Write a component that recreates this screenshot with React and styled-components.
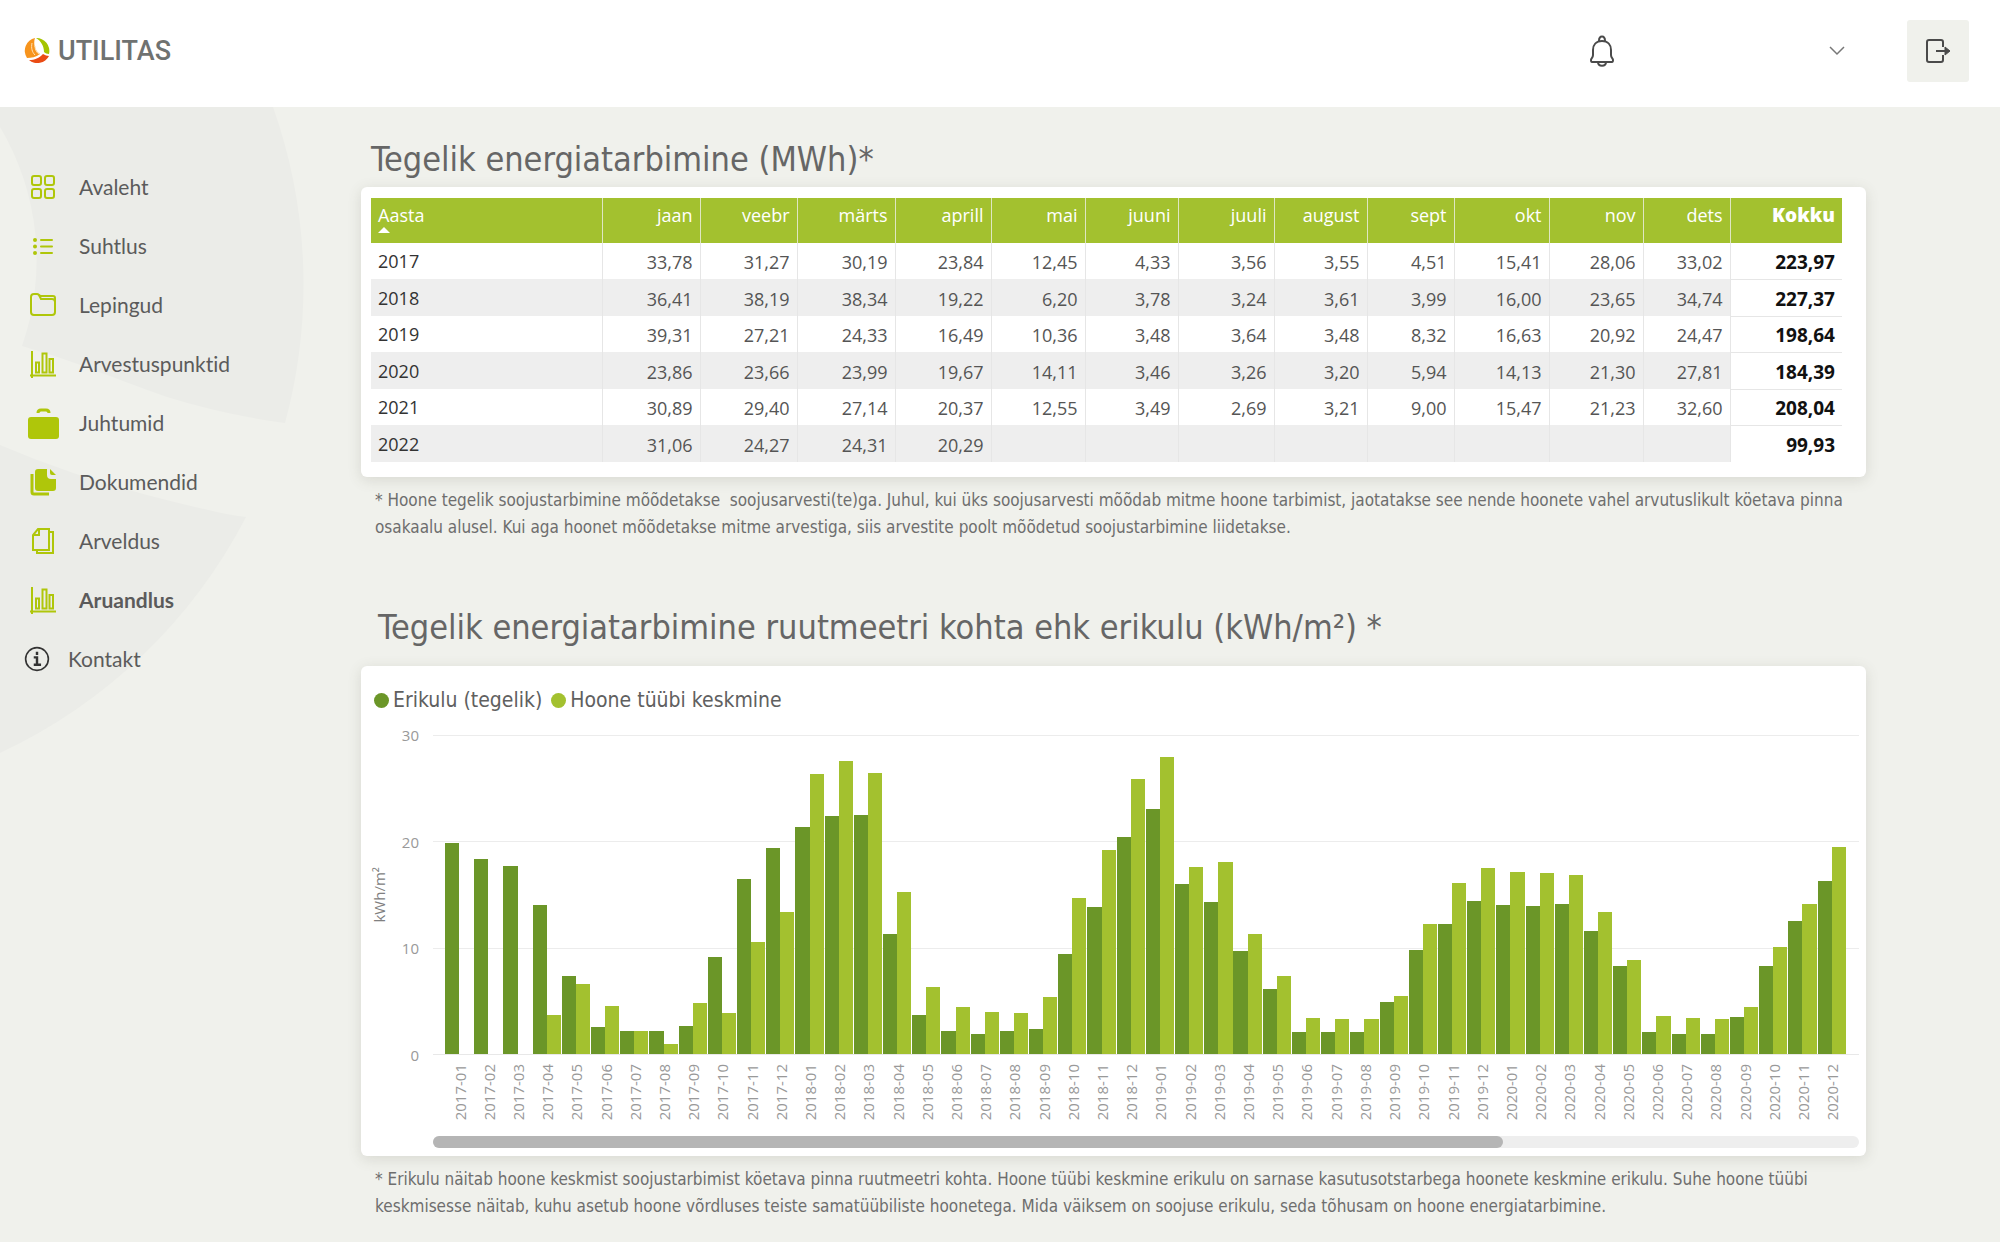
import React from 'react';
import styled, { createGlobalStyle, css } from 'styled-components';

const color = {
  green: '#a3c12f',
  darkGreen: '#6b9628',
  icon: '#afc60a',
  page: '#f0f1ec',
  wave: '#ebece8',
  text: '#5b5b5b',
  muted: '#6e6e6e',
  axis: '#999999',
};

const GlobalStyle = createGlobalStyle`
  * {
    box-sizing: border-box;
  }

  body {
    margin: 0;
    background: ${color.page};
    color: ${color.text};
    font-family: 'DejaVu Sans Condensed', 'DejaVu Sans', sans-serif;
  }
`;

const Header = styled.header`
  display: flex;
  align-items: center;
  height: 107px;
  padding: 0 31px 6px 24px;
  background: #fff;
`;

const Logo = styled.a`
  display: flex;
  align-items: center;
  gap: 8px;
  margin-right: auto;
  color: #6f7271;
  font: 500 27px/32px Roboto, sans-serif;
  text-decoration: none;
`;

const IconButton = styled.button`
  display: flex;
  align-items: center;
  justify-content: center;
  padding: 0;
  border: 0;
  background: none;
  color: #4a4a4a;
  cursor: pointer;
`;

const AccountButton = styled(IconButton)`
  justify-content: flex-end;
  width: 230px;
  margin-right: 62px;
  color: #777;
`;

const LogoutButton = styled(IconButton)`
  width: 62px;
  height: 62px;
  border-radius: 3px;
  background: ${color.page};
`;

const Body = styled.div`
  position: relative;
  display: flex;
  min-height: calc(100vh - 107px);
`;

const Wave = styled.svg`
  position: absolute;
  top: 0;
  left: 0;
`;

const Sidebar = styled.nav`
  position: relative;
  flex: 0 0 361px;
  padding-top: 50px;
`;

const NavList = styled.ul`
  margin: 0;
  padding: 0;
  list-style: none;
`;

const NavLink = styled.a`
  display: flex;
  align-items: center;
  gap: ${({ $compact }) => ($compact ? 18 : 20)}px;
  height: 59px;
  padding-left: ${({ $compact }) => ($compact ? 24 : 27)}px;
  color: ${color.text};
  font: ${({ $active }) => ($active ? 700 : 400)} 21px/28px Lato, sans-serif;
  font-variant-ligatures: none;
  text-decoration: none;

  svg {
    flex: none;
    color: ${({ $compact }) => ($compact ? '#333' : color.icon)};
  }
`;

const Main = styled.main`
  position: relative;
  flex: 1;
  min-width: 0;
  padding: 30px 134px 0 0;
`;

const Title = styled.h1`
  margin: 0;
  padding: 0 10px;
  color: #666;
  font-size: 34px;
  font-weight: 400;
  line-height: 44px;
`;

const Subtitle = styled(Title).attrs({ as: 'h2' })`
  margin-top: 64px;
  padding: 0 17px;
`;

const Card = styled.section`
  border-radius: 6px;
  background: #fff;
  box-shadow: 0 3px 14px rgba(90, 90, 70, 0.16);
`;

const TableCard = styled(Card)`
  margin-top: 6px;
  padding: 11px 24px 15px 10px;
`;

const ChartCard = styled(Card)`
  margin-top: 17px;
  padding: 20px 7px 8px 12px;
`;

const Footnote = styled.p`
  margin: 10px 0 0;
  padding: 0 10px 0 14px;
  color: ${color.muted};
  font-size: 17px;
  line-height: 27px;
`;

const Table = styled.table`
  width: 100%;
  border-collapse: collapse;
  table-layout: fixed;
  color: #555;
  font-family: 'Open Sans', sans-serif;
  font-size: 18px;
  line-height: 24px;
`;

const HeadCell = styled.th`
  width: ${({ $width }) => $width}px;
  height: 45px;
  padding: 5px 7px 0;
  border-right: 1px solid #dfe6c3;
  background: ${color.green};
  color: #fff;
  font-weight: 500;
  text-align: right;
  vertical-align: top;

  &:first-child {
    text-align: left;
  }

  &:last-child {
    border-right: 0;
    font-size: 19px;
    font-weight: 800;
  }
`;

const SortArrow = styled.span`
  display: block;
  width: 0;
  border: 6px solid transparent;
  border-top: 0;
  border-bottom: 6px solid #fff;
`;

const cell = css`
  padding: 2px 7px 0;
  border-right: 1px solid #e6e6e6;
  font-weight: 400;
`;

const Row = styled.tr`
  height: 36px;

  &:nth-child(even) {
    height: 37px;
    background: #eee;
  }
`;

const YearCell = styled.th`
  ${cell}
  padding-top: 0;
  color: #333;
  text-align: left;
`;

const Cell = styled.td`
  ${cell}
  text-align: right;
`;

const TotalCell = styled(Cell)`
  border-right: 0;
  border-bottom: 1px solid #e6e6e6;
  background: #fff;
  color: #111;
  font-size: 19px;
  font-weight: 700;

  ${Row}:last-child & {
    border-bottom: 0;
  }
`;

const Legend = styled.ul`
  display: flex;
  gap: 9px;
  margin: 0;
  padding: 0 1px;
  list-style: none;
  color: #606060;
  font-size: 21px;
  line-height: 28px;
`;

const LegendItem = styled.li`
  display: flex;
  align-items: center;
  gap: 4px;

  &::before {
    width: 15px;
    height: 15px;
    border-radius: 50%;
    background: ${({ $color }) => $color};
    content: '';
  }
`;

const Chart = styled.div`
  display: grid;
  grid-template-columns: 12px 34px 1fr;
  grid-template-rows: 320px auto;
  padding-top: 21px;
  color: ${color.axis};
  font: 15px/16px 'Open Sans', sans-serif;
`;

const Vertical = styled.span`
  writing-mode: vertical-rl;
  transform: rotate(180deg);
`;

const AxisTitle = styled(Vertical)`
  align-self: center;
  justify-self: center;
  color: #808080;
`;

const Ticks = styled.div`
  display: flex;
  flex-direction: column;
  justify-content: space-between;
  margin: -8px 0;
  text-align: right;
`;

const Plot = styled.div`
  display: flex;
  margin-left: 14px;
  padding: 0 12px;
  border-bottom: 1px solid #e8e8e8;
  background: repeating-linear-gradient(#ececec 0 1px, transparent 1px calc(100% / 3));
`;

const Month = styled.div`
  display: flex;
  flex: 1;
  align-items: flex-end;
  padding-right: 1px;
`;

const Bar = styled.div`
  flex: 1;
  background: ${({ $color }) => $color};
`;

const Months = styled.div`
  display: flex;
  grid-column: 3;
  margin-left: 14px;
  padding: 9px 12px 0;
`;

const MonthLabel = styled.div`
  display: flex;
  flex: 1;
  justify-content: center;
  width: 0;
`;

const ScrollTrack = styled.div`
  grid-column: 3;
  height: 12px;
  margin: 16px 0 0 14px;
  border-radius: 6px;
  background: #eee;
`;

const ScrollThumb = styled.div`
  width: 75%;
  height: 100%;
  border-radius: 6px;
  background: #b5b5b5;
`;

const columns = [
  ['jaan', 98],
  ['veebr', 97],
  ['märts', 98],
  ['aprill', 96],
  ['mai', 94],
  ['juuni', 93],
  ['juuli', 96],
  ['august', 93],
  ['sept', 87],
  ['okt', 95],
  ['nov', 94],
  ['dets', 87],
];

const consumption = [
  ['2017', '33,78', '31,27', '30,19', '23,84', '12,45', '4,33', '3,56', '3,55', '4,51', '15,41', '28,06', '33,02', '223,97'],
  ['2018', '36,41', '38,19', '38,34', '19,22', '6,20', '3,78', '3,24', '3,61', '3,99', '16,00', '23,65', '34,74', '227,37'],
  ['2019', '39,31', '27,21', '24,33', '16,49', '10,36', '3,48', '3,64', '3,48', '8,32', '16,63', '20,92', '24,47', '198,64'],
  ['2020', '23,86', '23,66', '23,99', '19,67', '14,11', '3,46', '3,26', '3,20', '5,94', '14,13', '21,30', '27,81', '184,39'],
  ['2021', '30,89', '29,40', '27,14', '20,37', '12,55', '3,49', '2,69', '3,21', '9,00', '15,47', '21,23', '32,60', '208,04'],
  ['2022', '31,06', '24,27', '24,31', '20,29', '', '', '', '', '', '', '', '', '99,93'],
];

// [actual, building type average] in kWh/m², one pair per month from 2017-01
const usage = [
  [19.85, 0], [18.36, 0], [17.7, 0], [14, 3.7], [7.33, 6.55], [2.53, 4.5],
  [2.14, 2.14], [2.14, 0.94], [2.66, 4.8], [9.08, 3.9], [16.5, 10.5], [19.36, 13.4],
  [21.37, 26.3], [22.38, 27.57], [22.48, 26.43], [11.25, 15.28], [3.63, 6.26], [2.2, 4.4],
  [1.9, 3.96], [2.14, 3.86], [2.33, 5.4], [9.37, 14.63], [13.85, 19.23], [20.4, 25.9],
  [23.06, 27.9], [15.96, 17.6], [14.27, 18.03], [9.67, 11.29], [6.07, 7.36], [2.04, 3.4],
  [2.1, 3.34], [2.08, 3.34], [4.87, 5.5], [9.76, 12.23], [12.26, 16.1], [14.37, 17.45],
  [13.98, 17.13], [13.88, 17], [14.08, 16.87], [11.55, 13.33], [8.3, 8.8], [2.04, 3.54],
  [1.9, 3.4], [1.88, 3.34], [3.5, 4.44], [8.3, 10.05], [12.52, 14.14], [16.3, 19.5],
];

const monthName = (index) =>
  `${2017 + Math.floor(index / 12)}-${String((index % 12) + 1).padStart(2, '0')}`;

const barHeight = (value) => ({ height: `${(value / 30) * 100}%` });

const Icon = ({ size = 32, children }) => (
  <svg width={size} height={size} viewBox="0 0 32 32" fill="none" stroke="currentColor" strokeWidth="2" aria-hidden="true">
    {children}
  </svg>
);

const GridIcon = () => (
  <Icon>
    <rect x="5" y="5" width="9" height="9" rx="2" />
    <rect x="18" y="5" width="9" height="9" rx="2" />
    <rect x="5" y="18" width="9" height="9" rx="2" />
    <rect x="18" y="18" width="9" height="9" rx="2" />
  </Icon>
);

const ListIcon = () => (
  <Icon>
    <path d="M14 10h11M14 16.500h11M14 23h11" strokeLinecap="round" />
    <path d="M8 10h0M8 16.500h0M8 23h0" strokeWidth="4" strokeLinecap="round" />
  </Icon>
);

const FolderIcon = () => (
  <Icon>
    <path d="M4 8a3 3 0 0 1 3-3h3c2 0 2 2 4 2h12a2 2 0 0 1 2 2v14a3 3 0 0 1-3 3H7a3 3 0 0 1-3-3z" />
    <path d="M12 6l2 4h11a3 3 0 0 1 3 3" />
  </Icon>
);

const ChartIcon = () => (
  <Icon>
    <path d="M5 3v27M3 27.500h26" />
    <path d="M9 14.500h3v10h-3zM15.500 5.500h4v19h-4zM22.500 11h3.500v13.500h-3.500z" />
  </Icon>
);

const BriefcaseIcon = () => (
  <Icon>
    <rect x="1" y="10" width="31" height="22" rx="3" fill="currentColor" stroke="none" />
    <path d="M11 6c0-2 1-3 3-3h5c2 0 3 1 3 3" strokeWidth="3" />
  </Icon>
);

const DocumentsIcon = () => (
  <Icon>
    <path d="M11 3h9v6a4 4 0 0 0 4 4h5v9a3 3 0 0 1-3 3H11a3 3 0 0 1-3-3V6a3 3 0 0 1 3-3zM23 3l6 6h-4a2 2 0 0 1-2-2z" fill="currentColor" stroke="none" />
    <path d="M5 8v18a2 2 0 0 0 2 2h15" strokeWidth="3" />
  </Icon>
);

const PagesIcon = () => (
  <Icon>
    <path d="M11 4h11v21H6V10zM12 4v6H6M22 7h4v21H10v-3" />
  </Icon>
);

const InfoIcon = () => (
  <Icon size={26}>
    <circle cx="16" cy="16" r="14" />
    <path d="M16 7v4M12 14h4v9M12 23h9" strokeWidth="3" />
  </Icon>
);

const LogoIcon = () => (
  <svg width="26" height="26" viewBox="0 0 26 26" aria-hidden="true">
    <path d="M11 0A13 13 0 0 0 3 20c4 0 9-1 13-4C11 13 9 6 11 0z" fill="#f7941d" />
    <path d="M12 0a13 13 0 0 1 13 16c-2 0-4-1-5-2C20 8 17 3 12 0z" fill="#a5c400" />
    <path d="M5 22c6 0 10-2 14-6 2 1 4 2 6 2A13 13 0 0 1 5 22z" fill="#ea4b14" />
    <path d="M8 5c-1 5 0 9 3 12M11 8c0 4 2 7 4 8" fill="none" stroke="#ffe2b8" />
  </svg>
);

const BellIcon = () => (
  <svg width="26" height="32" viewBox="0 0 26 32" fill="none" stroke="currentColor" strokeWidth="2" aria-hidden="true">
    <path d="M13 6C7 6 4 10 4 15v5c0 3-2 3-2 5 0 1 0 2 1 2h20c1 0 1-1 1-2 0-2-2-2-2-5v-5c0-5-3-9-9-9z" />
    <path d="M10 6c0-6 6-6 6 0M9 27c0 5 8 5 8 0" />
  </svg>
);

const ChevronIcon = () => (
  <svg width="16" height="10" viewBox="0 0 16 10" fill="none" stroke="currentColor" strokeWidth="1.5" aria-hidden="true">
    <path d="M1 1l7 7 7-7" />
  </svg>
);

const LogoutIcon = () => (
  <svg width="26" height="26" viewBox="0 0 26 26" fill="none" stroke="currentColor" strokeWidth="2" aria-hidden="true">
    <path d="M18 9V4a2 2 0 0 0-2-2H4a2 2 0 0 0-2 2v18a2 2 0 0 0 2 2h12a2 2 0 0 0 2-2v-5M11 13h13" />
    <path d="M20 9l5 4-5 4z" fill="currentColor" strokeWidth="1" />
  </svg>
);

const navItems = [
  { label: 'Avaleht', icon: GridIcon },
  { label: 'Suhtlus', icon: ListIcon },
  { label: 'Lepingud', icon: FolderIcon },
  { label: 'Arvestuspunktid', icon: ChartIcon },
  { label: 'Juhtumid', icon: BriefcaseIcon },
  { label: 'Dokumendid', icon: DocumentsIcon },
  { label: 'Arveldus', icon: PagesIcon },
  { label: 'Aruandlus', icon: ChartIcon, active: true },
  { label: 'Kontakt', icon: InfoIcon, compact: true },
];

const Background = () => (
  <Wave width="310" height="660" viewBox="0 0 310 660" fill={color.wave} aria-hidden="true">
    <path d="M0 0H273A530 530 0 0 1 285 316Q225 308 167 290C110 270 80 256 22 239A260 260 0 0 0 0 20z" />
    <path d="M0 338Q70 368 147 388T246 410A530 530 0 0 1 0 646z" />
  </Wave>
);

const Navigation = () => (
  <Sidebar>
    <NavList>
      {navItems.map(({ label, icon: ItemIcon, active, compact }) => (
        <li key={label}>
          <NavLink href="#" $active={active} $compact={compact} aria-current={active ? 'page' : undefined}>
            <ItemIcon />
            {label}
          </NavLink>
        </li>
      ))}
    </NavList>
  </Sidebar>
);

const ConsumptionTable = () => (
  <Table>
    <thead>
      <tr>
        <HeadCell scope="col" $width={231} aria-sort="ascending">
          Aasta
          <SortArrow />
        </HeadCell>
        {columns.map(([month, width]) => (
          <HeadCell key={month} scope="col" $width={width}>{month}</HeadCell>
        ))}
        <HeadCell scope="col" $width={112}>Kokku</HeadCell>
      </tr>
    </thead>
    <tbody>
      {consumption.map(([year, ...values]) => (
        <Row key={year}>
          <YearCell scope="row">{year}</YearCell>
          {columns.map(([month], i) => (
            <Cell key={month}>{values[i]}</Cell>
          ))}
          <TotalCell>{values[12]}</TotalCell>
        </Row>
      ))}
    </tbody>
  </Table>
);

const UsageChart = () => (
  <Chart>
    <AxisTitle>kWh/m²</AxisTitle>
    <Ticks>
      <span>30</span>
      <span>20</span>
      <span>10</span>
      <span>0</span>
    </Ticks>
    <Plot>
      {usage.map(([actual, average], i) => (
        <Month key={monthName(i)}>
          <Bar $color={color.darkGreen} style={barHeight(actual)} />
          <Bar $color={color.green} style={barHeight(average)} />
        </Month>
      ))}
    </Plot>
    <Months>
      {usage.map((_, i) => (
        <MonthLabel key={monthName(i)}>
          <Vertical>{monthName(i)}</Vertical>
        </MonthLabel>
      ))}
    </Months>
    <ScrollTrack>
      <ScrollThumb />
    </ScrollTrack>
  </Chart>
);

const App = () => (
  <>
    <GlobalStyle />
    <Header>
      <Logo href="#">
        <LogoIcon />
        UTILITAS
      </Logo>
      <IconButton type="button" aria-label="Teavitused"><BellIcon /></IconButton>
      <AccountButton type="button" aria-label="Konto"><ChevronIcon /></AccountButton>
      <LogoutButton type="button" aria-label="Logi välja"><LogoutIcon /></LogoutButton>
    </Header>
    <Body>
      <Background />
      <Navigation />
      <Main>
        <Title>Tegelik energiatarbimine (MWh)*</Title>
        <TableCard>
          <ConsumptionTable />
        </TableCard>
        <Footnote>
          * Hoone tegelik soojustarbimine mõõdetakse &nbsp;soojusarvesti(te)ga. Juhul, kui üks soojusarvesti mõõdab mitme hoone tarbimist, jaotatakse see nende hoonete vahel arvutuslikult köetava pinna osakaalu alusel. Kui aga hoonet mõõdetakse mitme arvestiga, siis arvestite poolt mõõdetud soojustarbimine liidetakse.
        </Footnote>
        <Subtitle>Tegelik energiatarbimine ruutmeetri kohta ehk erikulu (kWh/m²) *</Subtitle>
        <ChartCard>
          <Legend>
            <LegendItem $color={color.darkGreen}>Erikulu (tegelik)</LegendItem>
            <LegendItem $color={color.green}>Hoone tüübi keskmine</LegendItem>
          </Legend>
          <UsageChart />
        </ChartCard>
        <Footnote>
          * Erikulu näitab hoone keskmist soojustarbimist köetava pinna ruutmeetri kohta. Hoone tüübi keskmine erikulu on sarnase kasutusotstarbega hoonete keskmine erikulu. Suhe hoone tüübi keskmisesse näitab, kuhu asetub hoone võrdluses teiste samatüübiliste hoonetega. Mida väiksem on soojuse erikulu, seda tõhusam on hoone energiatarbimine.
        </Footnote>
      </Main>
    </Body>
  </>
);

export default App;
